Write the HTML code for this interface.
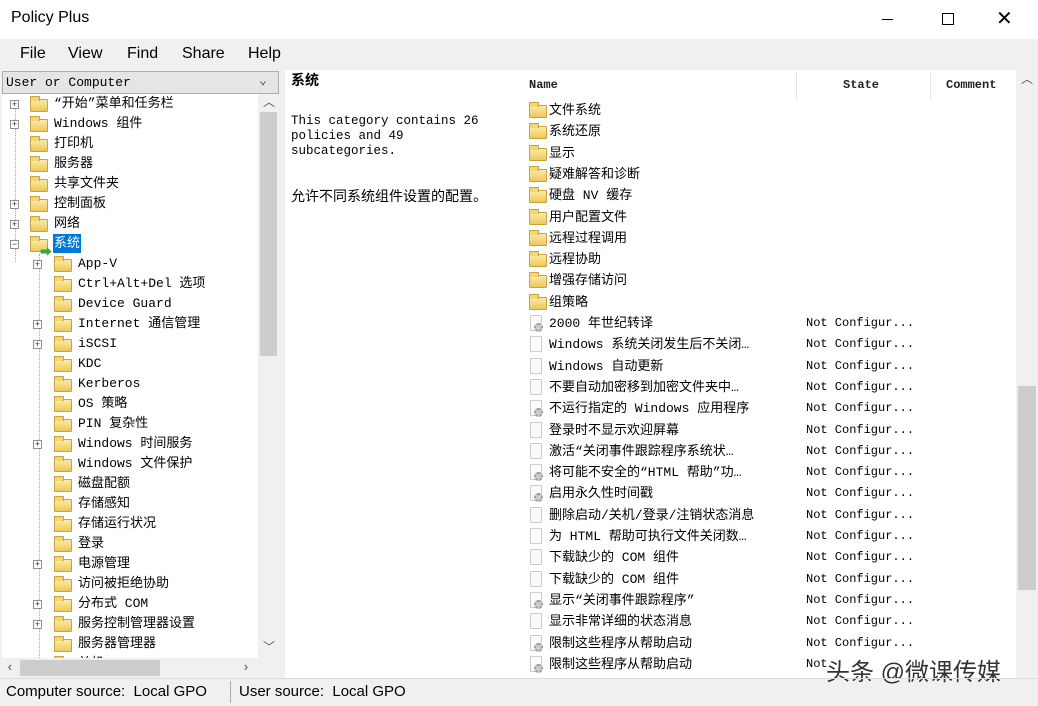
<!DOCTYPE html><html><head><meta charset="utf-8"><style>
*{margin:0;padding:0;box-sizing:border-box}
body{width:1038px;height:706px;position:relative;background:#fff;font-family:"Liberation Mono","Noto Sans CJK SC",monospace;font-size:13px;color:#000;overflow:hidden}
.a{position:absolute}
.ui{font-family:"Liberation Sans","Noto Sans CJK SC",sans-serif}
.f{position:absolute;width:18px;height:13px;background:linear-gradient(#fbe9a6,#eec85a);border:1px solid #c9a33e;border-radius:1px}
.f:before{content:"";position:absolute;left:-1px;top:-4px;width:8px;height:4px;background:#f3d777;border:1px solid #c9a33e;border-bottom:none;border-radius:1px 1px 0 0}
.ex{position:absolute;width:9px;height:9px;border:1px solid #919191;background:#fff;font:9px/7px "Liberation Sans";text-align:center;color:#333}
.t{position:absolute;white-space:nowrap;line-height:20px;height:20px}
.r{position:absolute;white-space:nowrap;height:21px;line-height:21px}
.d{position:absolute;width:12px;height:16px;border:1px solid #ccc;background:#fafafa}
.g{position:absolute;width:9px;height:9px;border-radius:50%;border:2px dotted #999;background:#ccc}
.dl{position:absolute;border-left:1px dotted #aaa}
.hd{font-size:12px;font-weight:bold;color:#222}
</style></head><body>
<div class="a ui" style="left:11px;top:9px;font-size:16px">Policy Plus</div>
<div class="a" style="left:882px;top:19px;width:11px;height:1px;background:#000"></div>
<div class="a" style="left:942px;top:13px;width:12px;height:12px;border:1px solid #000"></div>
<div class="a ui" style="left:996px;top:6px;font-size:20px;font-weight:300">✕</div>
<div class="a" style="left:0;top:39px;width:1038px;height:667px;background:#f0f0f0"></div>
<div class="a ui" style="left:20px;top:45px;font-size:16px">File</div>
<div class="a ui" style="left:68px;top:45px;font-size:16px">View</div>
<div class="a ui" style="left:127px;top:45px;font-size:16px">Find</div>
<div class="a ui" style="left:182px;top:45px;font-size:16px">Share</div>
<div class="a ui" style="left:248px;top:45px;font-size:16px">Help</div>
<div class="a" style="left:2px;top:71px;width:277px;height:23px;background:#e5e5e5;border:1px solid #adadad"></div>
<div class="a" style="left:6px;top:75px;font-size:13px">User or Computer</div>
<div class="a" style="left:259px;top:73px;font-size:13px;color:#555">⌄</div>
<div class="a" style="left:2px;top:94px;width:256px;height:564px;background:#fff;overflow:hidden">
<div class="dl" style="left:13px;top:8px;height:160px"></div>
<div class="dl" style="left:37px;top:160px;height:410px"></div>
</div>
<div class="a" style="left:258px;top:94px;width:21px;height:564px;background:#f0f0f0"></div>
<div class="a" style="left:260px;top:112px;width:17px;height:244px;background:#cdcdcd"></div>
<div class="a" style="left:263px;top:93px;color:#555;font-size:12px">︿</div>
<div class="a" style="left:263px;top:638px;color:#555;font-size:12px">﹀</div>
<div class="a" style="left:2px;top:658px;width:256px;height:20px;background:#f0f0f0"></div>
<div class="a" style="left:20px;top:660px;width:140px;height:16px;background:#cdcdcd"></div>
<div class="a" style="left:6px;top:660px;color:#555">‹</div>
<div class="a" style="left:242px;top:660px;color:#555">›</div>
<div class="a" style="left:0;top:95px;width:258px;height:563px;overflow:hidden">
<div class="ex" style="left:10px;top:5px">+</div><div class="f" style="left:30px;top:4px"></div><div class="t" style="left:54px;top:-1px">“开始”菜单和任务栏</div>
<div class="ex" style="left:10px;top:25px">+</div><div class="f" style="left:30px;top:24px"></div><div class="t" style="left:54px;top:19px">Windows 组件</div>
<div class="f" style="left:30px;top:44px"></div><div class="t" style="left:54px;top:39px">打印机</div>
<div class="f" style="left:30px;top:64px"></div><div class="t" style="left:54px;top:59px">服务器</div>
<div class="f" style="left:30px;top:84px"></div><div class="t" style="left:54px;top:79px">共享文件夹</div>
<div class="ex" style="left:10px;top:105px">+</div><div class="f" style="left:30px;top:104px"></div><div class="t" style="left:54px;top:99px">控制面板</div>
<div class="ex" style="left:10px;top:125px">+</div><div class="f" style="left:30px;top:124px"></div><div class="t" style="left:54px;top:119px">网络</div>
<div class="ex" style="left:10px;top:145px">−</div><div class="f" style="left:30px;top:144px"></div><div class="a" style="left:40px;top:148px;color:#3a3;font-size:12px">➡</div><div class="t" style="left:53px;top:139px;background:#0078d7;color:#fff;padding:0 1px;height:19px;line-height:19px">系统</div>
<div class="ex" style="left:33px;top:165px">+</div><div class="f" style="left:54px;top:164px"></div><div class="t" style="left:78px;top:159px">App-V</div>
<div class="f" style="left:54px;top:184px"></div><div class="t" style="left:78px;top:179px">Ctrl+Alt+Del 选项</div>
<div class="f" style="left:54px;top:204px"></div><div class="t" style="left:78px;top:199px">Device Guard</div>
<div class="ex" style="left:33px;top:225px">+</div><div class="f" style="left:54px;top:224px"></div><div class="t" style="left:78px;top:219px">Internet 通信管理</div>
<div class="ex" style="left:33px;top:245px">+</div><div class="f" style="left:54px;top:244px"></div><div class="t" style="left:78px;top:239px">iSCSI</div>
<div class="f" style="left:54px;top:264px"></div><div class="t" style="left:78px;top:259px">KDC</div>
<div class="f" style="left:54px;top:284px"></div><div class="t" style="left:78px;top:279px">Kerberos</div>
<div class="f" style="left:54px;top:304px"></div><div class="t" style="left:78px;top:299px">OS 策略</div>
<div class="f" style="left:54px;top:324px"></div><div class="t" style="left:78px;top:319px">PIN 复杂性</div>
<div class="ex" style="left:33px;top:345px">+</div><div class="f" style="left:54px;top:344px"></div><div class="t" style="left:78px;top:339px">Windows 时间服务</div>
<div class="f" style="left:54px;top:364px"></div><div class="t" style="left:78px;top:359px">Windows 文件保护</div>
<div class="f" style="left:54px;top:384px"></div><div class="t" style="left:78px;top:379px">磁盘配额</div>
<div class="f" style="left:54px;top:404px"></div><div class="t" style="left:78px;top:399px">存储感知</div>
<div class="f" style="left:54px;top:424px"></div><div class="t" style="left:78px;top:419px">存储运行状况</div>
<div class="f" style="left:54px;top:444px"></div><div class="t" style="left:78px;top:439px">登录</div>
<div class="ex" style="left:33px;top:465px">+</div><div class="f" style="left:54px;top:464px"></div><div class="t" style="left:78px;top:459px">电源管理</div>
<div class="f" style="left:54px;top:484px"></div><div class="t" style="left:78px;top:479px">访问被拒绝协助</div>
<div class="ex" style="left:33px;top:505px">+</div><div class="f" style="left:54px;top:504px"></div><div class="t" style="left:78px;top:499px">分布式 COM</div>
<div class="ex" style="left:33px;top:525px">+</div><div class="f" style="left:54px;top:524px"></div><div class="t" style="left:78px;top:519px">服务控制管理器设置</div>
<div class="f" style="left:54px;top:544px"></div><div class="t" style="left:78px;top:539px">服务器管理器</div>
<div class="f" style="left:54px;top:564px"></div><div class="t" style="left:78px;top:559px">关机</div>
</div>
<div class="a" style="left:285px;top:70px;width:235px;height:608px;background:#fff"></div>
<div class="a" style="left:291px;top:70px;font-weight:bold;font-size:14px">系统</div>
<div class="a" style="left:291px;top:114px;font-size:12.5px;line-height:15px">This category contains 26<br>policies and 49<br>subcategories.</div>
<div class="a" style="left:291px;top:186px;font-size:14px">允许不同系统组件设置的配置。</div>
<div class="a" style="left:520px;top:70px;width:496px;height:608px;background:#fff;overflow:hidden">
<div class="a hd" style="left:9px;top:8px">Name</div>
<div class="a" style="left:276px;top:2px;height:28px;border-left:1px solid #e5e5e5"></div>
<div class="a hd" style="left:323px;top:8px">State</div>
<div class="a" style="left:410px;top:2px;height:28px;border-left:1px solid #e5e5e5"></div>
<div class="a hd" style="left:426px;top:8px">Comment</div>
<div class="a" style="left:0;top:30px;width:496px">
<div class="f" style="left:9px;top:5px"></div><div class="r" style="left:29px;top:0">文件系统</div>
<div class="f" style="left:9px;top:26px"></div><div class="r" style="left:29px;top:21px">系统还原</div>
<div class="f" style="left:9px;top:48px"></div><div class="r" style="left:29px;top:43px">显示</div>
<div class="f" style="left:9px;top:69px"></div><div class="r" style="left:29px;top:64px">疑难解答和诊断</div>
<div class="f" style="left:9px;top:90px"></div><div class="r" style="left:29px;top:85px">硬盘 NV 缓存</div>
<div class="f" style="left:9px;top:112px"></div><div class="r" style="left:29px;top:107px">用户配置文件</div>
<div class="f" style="left:9px;top:133px"></div><div class="r" style="left:29px;top:128px">远程过程调用</div>
<div class="f" style="left:9px;top:154px"></div><div class="r" style="left:29px;top:149px">远程协助</div>
<div class="f" style="left:9px;top:175px"></div><div class="r" style="left:29px;top:170px">增强存储访问</div>
<div class="f" style="left:9px;top:197px"></div><div class="r" style="left:29px;top:192px">组策略</div>
</div>
<div class="a" style="left:0;top:243px;width:496px;font-size:13px">
<div class="d" style="left:10px;top:2px"></div><div class="g" style="left:14px;top:10px"></div><div class="r" style="left:29px;top:0">2000 年世纪转译</div><div class="r" style="left:286px;top:0;font-size:12px">Not Configur...</div>
<div class="d" style="left:10px;top:23px"></div><div class="r" style="left:29px;top:21px">Windows 系统关闭发生后不关闭…</div><div class="r" style="left:286px;top:21px;font-size:12px">Not Configur...</div>
<div class="d" style="left:10px;top:45px"></div><div class="r" style="left:29px;top:43px">Windows 自动更新</div><div class="r" style="left:286px;top:43px;font-size:12px">Not Configur...</div>
<div class="d" style="left:10px;top:66px"></div><div class="r" style="left:29px;top:64px">不要自动加密移到加密文件夹中…</div><div class="r" style="left:286px;top:64px;font-size:12px">Not Configur...</div>
<div class="d" style="left:10px;top:87px"></div><div class="g" style="left:14px;top:95px"></div><div class="r" style="left:29px;top:85px">不运行指定的 Windows 应用程序</div><div class="r" style="left:286px;top:85px;font-size:12px">Not Configur...</div>
<div class="d" style="left:10px;top:109px"></div><div class="r" style="left:29px;top:107px">登录时不显示欢迎屏幕</div><div class="r" style="left:286px;top:107px;font-size:12px">Not Configur...</div>
<div class="d" style="left:10px;top:130px"></div><div class="r" style="left:29px;top:128px">激活“关闭事件跟踪程序系统状…</div><div class="r" style="left:286px;top:128px;font-size:12px">Not Configur...</div>
<div class="d" style="left:10px;top:151px"></div><div class="g" style="left:14px;top:159px"></div><div class="r" style="left:29px;top:149px">将可能不安全的“HTML 帮助”功…</div><div class="r" style="left:286px;top:149px;font-size:12px">Not Configur...</div>
<div class="d" style="left:10px;top:172px"></div><div class="g" style="left:14px;top:180px"></div><div class="r" style="left:29px;top:170px">启用永久性时间戳</div><div class="r" style="left:286px;top:170px;font-size:12px">Not Configur...</div>
<div class="d" style="left:10px;top:194px"></div><div class="r" style="left:29px;top:192px">删除启动/关机/登录/注销状态消息</div><div class="r" style="left:286px;top:192px;font-size:12px">Not Configur...</div>
<div class="d" style="left:10px;top:215px"></div><div class="r" style="left:29px;top:213px">为 HTML 帮助可执行文件关闭数…</div><div class="r" style="left:286px;top:213px;font-size:12px">Not Configur...</div>
<div class="d" style="left:10px;top:236px"></div><div class="r" style="left:29px;top:234px">下载缺少的 COM 组件</div><div class="r" style="left:286px;top:234px;font-size:12px">Not Configur...</div>
<div class="d" style="left:10px;top:258px"></div><div class="r" style="left:29px;top:256px">下载缺少的 COM 组件</div><div class="r" style="left:286px;top:256px;font-size:12px">Not Configur...</div>
<div class="d" style="left:10px;top:279px"></div><div class="g" style="left:14px;top:287px"></div><div class="r" style="left:29px;top:277px">显示“关闭事件跟踪程序”</div><div class="r" style="left:286px;top:277px;font-size:12px">Not Configur...</div>
<div class="d" style="left:10px;top:300px"></div><div class="r" style="left:29px;top:298px">显示非常详细的状态消息</div><div class="r" style="left:286px;top:298px;font-size:12px">Not Configur...</div>
<div class="d" style="left:10px;top:322px"></div><div class="g" style="left:14px;top:330px"></div><div class="r" style="left:29px;top:320px">限制这些程序从帮助启动</div><div class="r" style="left:286px;top:320px;font-size:12px">Not Configur...</div>
<div class="d" style="left:10px;top:343px"></div><div class="g" style="left:14px;top:351px"></div><div class="r" style="left:29px;top:341px">限制这些程序从帮助启动</div><div class="r" style="left:286px;top:341px;font-size:12px">Not</div>
</div>
</div>
<div class="a" style="left:1016px;top:70px;width:22px;height:608px;background:#f0f0f0"></div>
<div class="a" style="left:1018px;top:386px;width:18px;height:204px;background:#cdcdcd"></div>
<div class="a" style="left:1021px;top:70px;color:#555;font-size:12px">︿</div>
<div class="a ui" style="left:826px;top:652px;font-size:24px;color:#333;text-shadow:0 0 2px #fff,0 0 2px #fff">头条 @微课传媒</div>
<div class="a" style="left:0;top:678px;width:1038px;height:1px;background:#dadada"></div>
<div class="a ui" style="left:6px;top:683px;font-size:15px">Computer source:&nbsp; Local GPO</div>
<div class="a" style="left:230px;top:681px;width:1px;height:22px;background:#aaa"></div>
<div class="a ui" style="left:239px;top:683px;font-size:15px">User source:&nbsp; Local GPO</div>
</body></html>
